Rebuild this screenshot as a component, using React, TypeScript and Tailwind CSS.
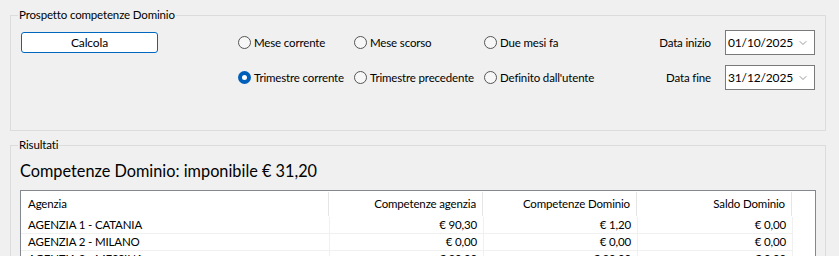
import { ChevronDown } from 'lucide-react';

const righe = [
  { agenzia: 'AGENZIA 1 - CATANIA', compAgenzia: '€ 90,30', compDominio: '€ 1,20', saldo: '€ 0,00' },
  { agenzia: 'AGENZIA 2 - MILANO', compAgenzia: '€ 0,00', compDominio: '€ 0,00', saldo: '€ 0,00' },
  { agenzia: 'AGENZIA 3 - MESSINA', compAgenzia: '€ 30,00', compDominio: '€ 30,00', saldo: '€ 0,00' },
];

function Radio({ label, checked = false }: { label: string; checked?: boolean }) {
  return (
    <label className="flex items-center gap-[3px] h-[25px] whitespace-nowrap">
      {checked ? (
        <span className="w-[13px] h-[13px] shrink-0 rounded-full bg-[#005fb8] flex items-center justify-center">
          <span className="w-[5px] h-[5px] rounded-full bg-white" />
        </span>
      ) : (
        <span className="w-[13px] h-[13px] shrink-0 rounded-full border border-[#555] bg-[#f7f7f7]" />
      )}
      <span>{label}</span>
    </label>
  );
}

function DateBox({ value }: { value: string }) {
  return (
    <div className="w-[90px] h-[25px] bg-white border border-[#7a7a7a] flex items-center pl-[2px] pr-[5px] text-[12px]">
      <span className="flex-1">{value}</span>
      <ChevronDown size={12} strokeWidth={1.1} className="text-[#444]" />
    </div>
  );
}

export default function App() {
  return (
    <div
      className="w-[839px] h-[256px] overflow-hidden bg-[#f0f0f0] text-[11.5px] tracking-[-0.15px] leading-[16px] text-black"
      style={{ fontFamily: 'Lato, "Noto Sans", sans-serif' }}
    >
      {/* Prospetto */}
      <fieldset className="ml-[10px] mr-[13px] mt-[7px] h-[124px] border border-[#dcdcdc] px-[10px]">
        <legend className="-ml-[3px] px-[1px]">Prospetto competenze Dominio</legend>
        <div className="flex pt-[7px]">
          <button className="w-[137px] h-[21px] mt-[2px] bg-white border border-[#0067c0] rounded-[3px] text-[12px]">
            Calcola
          </button>
          <div className="ml-[80px] grid grid-cols-[116px_130px_150px] gap-y-[10px]">
            <Radio label="Mese corrente" />
            <Radio label="Mese scorso" />
            <Radio label="Due mesi fa" />
            <Radio label="Trimestre corrente" checked />
            <Radio label="Trimestre precedente" />
            <Radio label="Definito dall'utente" />
          </div>
          <div className="flex-1 grid grid-cols-[1fr_auto] gap-y-[10px] gap-x-[14px] items-center">
            <span className="text-right">Data inizio</span>
            <DateBox value="01/10/2025" />
            <span className="text-right">Data fine</span>
            <DateBox value="31/12/2025" />
          </div>
        </div>
      </fieldset>

      {/* Risultati */}
      <fieldset className="ml-[10px] mr-[13px] mt-[6px] h-[200px] border border-[#dcdcdc] px-[9px]">
        <legend className="-ml-[2px] px-[1px]">Risultati</legend>
        <div className="pt-[7px] text-[16.3px] tracking-normal leading-[22px]">Competenze Dominio: imponibile € 31,20</div>
        <div className="mt-[8px] border border-[#828790] bg-white">
          <div className="flex h-[26px]">
            <div className="w-[308px] flex items-center pl-[7px] border-r border-[#e5e5e5] my-[1px]">Agenzia</div>
            <div className="w-[154px] flex items-center justify-end pr-[6px] border-r border-[#e5e5e5] my-[1px]">Competenze agenzia</div>
            <div className="w-[154px] flex items-center justify-end pr-[6px] border-r border-[#e5e5e5] my-[1px]">Competenze Dominio</div>
            <div className="w-[155px] flex items-center justify-end pr-[6px] border-r border-[#e5e5e5] my-[1px]">Saldo Dominio</div>
          </div>
          {righe.map((r) => (
            <div key={r.agenzia} className="flex h-[17px]">
              <div className="w-[309px] flex items-center pl-[7px] border-r border-b border-[#f0f0f0]">{r.agenzia}</div>
              <div className="w-[154px] flex items-center justify-end pr-[6px] border-r border-b border-[#f0f0f0]">{r.compAgenzia}</div>
              <div className="w-[154px] flex items-center justify-end pr-[6px] border-r border-b border-[#f0f0f0]">{r.compDominio}</div>
              <div className="w-[155px] flex items-center justify-end pr-[6px] border-r border-b border-[#f0f0f0]">{r.saldo}</div>
            </div>
          ))}
        </div>
      </fieldset>
    </div>
  );
}
